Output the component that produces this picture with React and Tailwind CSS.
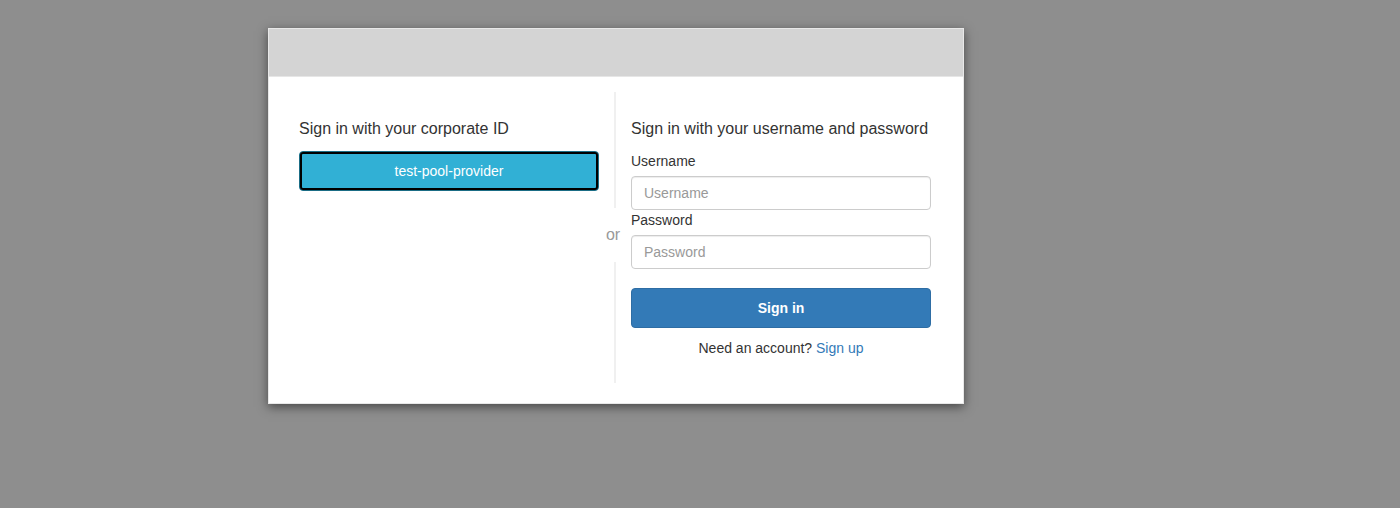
export default function App() {
  return (
    <div
      className="w-[1400px] h-[508px] bg-[#8e8e8e] pt-[28px] pl-[268px] overflow-hidden"
      style={{ fontFamily: '"Liberation Sans", Arial, sans-serif' }}
    >
      <div className="w-[696px] h-[376px] bg-white border border-[#e8e8e8] shadow-[0_3px_10px_rgba(0,0,0,0.5)] flex flex-col">
        <div className="h-[48px] bg-[#d4d4d4] border-b border-[#e6e6e6]" />
        <div className="flex px-[30px] pt-[15px]">
          <div className="w-[300px] pt-[27px]">
            <div className="text-[16px] leading-[20px] text-[#333]">Sign in with your corporate ID</div>
            <button className="mt-[12px] w-[300px] h-[40px] rounded-[4px] border border-[#1b6d85] bg-[#31b0d5] p-0">
              <div className="h-full w-full rounded-[3px] border-2 border-black flex items-center justify-center text-white text-[14px]">
                test-pool-provider
              </div>
            </button>
          </div>
          <div className="w-[32px] h-[291px] flex flex-col items-center">
            <div className="w-[2px] h-[116px] bg-[#f0f0f0]" />
            <div className="h-[54px] flex items-center pr-[4px] text-[16px] text-[#999]">or</div>
            <div className="w-[2px] flex-1 bg-[#f0f0f0]" />
          </div>
          <div className="w-[300px] pt-[27px]">
            <div className="text-[16px] leading-[20px] text-[#333]">Sign in with your username and password</div>
            <div className="mt-[12px] text-[14px] leading-[20px] text-[#333]">Username</div>
            <input
              className="mt-[5px] w-[300px] h-[34px] border border-[#ccc] rounded-[4px] px-[12px] text-[14px] text-[#555] placeholder:text-[#999] shadow-[inset_0_1px_1px_rgba(0,0,0,0.075)] outline-none"
              placeholder="Username"
            />
            <div className="mt-0 text-[14px] leading-[20px] text-[#333]">Password</div>
            <input
              type="password"
              className="mt-[5px] w-[300px] h-[34px] border border-[#ccc] rounded-[4px] px-[12px] text-[14px] text-[#555] placeholder:text-[#999] shadow-[inset_0_1px_1px_rgba(0,0,0,0.075)] outline-none"
              placeholder="Password"
            />
            <button className="mt-[19px] w-[300px] h-[40px] rounded-[4px] border border-[#2e6da4] bg-[#337ab7] text-white text-[14px] font-bold">
              Sign in
            </button>
            <div className="mt-[10px] text-[14px] leading-[20px] text-[#333] text-center">
              Need an account? <span className="text-[#337ab7]">Sign up</span>
            </div>
          </div>
        </div>
      </div>
    </div>
  );
}
